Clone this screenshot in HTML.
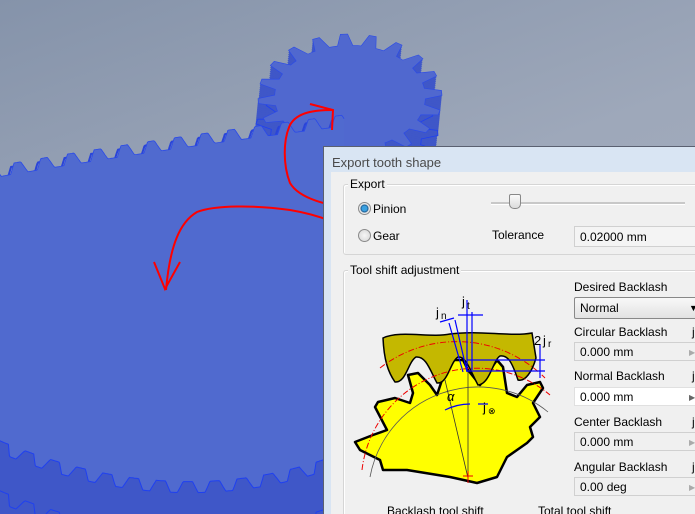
<!DOCTYPE html>
<html><head><meta charset="utf-8">
<style>
html,body{margin:0;padding:0;width:695px;height:514px;overflow:hidden;font-family:"Liberation Sans",sans-serif;position:relative;}
#bg{position:absolute;left:0;top:0;width:695px;height:514px;background:linear-gradient(160deg,#8593aa 0%,#9ea8ba 45%,#a9b1c1 100%);}
svg{position:absolute;left:0;top:0;}
.dlg{position:absolute;left:323px;top:146px;width:372px;height:368px;overflow:hidden;background:#d9e5f3;border-left:1px solid #5a6070;border-top:1px solid #5a6070;}
.title{position:absolute;left:8px;top:8px;font-size:13px;color:#4a4a4a;}
.body{position:absolute;left:7px;top:25px;right:0;bottom:0;background:#f0f0f0;overflow:hidden;}
.t{position:absolute;font-size:12px;color:#000;white-space:nowrap;}
.grp{position:absolute;border:1px solid #d5d5d5;border-radius:3px;box-shadow:inset 1px 1px 0 #fff;}
.gl{position:absolute;background:#f0f0f0;padding:0 2px;font-size:12px;}
.inp{position:absolute;height:19px;border:1px solid #d0d0d0;background:#f0f0f0;font-size:12px;line-height:19px;padding-left:5px;box-sizing:border-box;}
.radio{position:absolute;width:11px;height:11px;border-radius:50%;border:1px solid #8a8a8a;background:radial-gradient(circle,#f6f6f6,#d5d5d5);}
</style></head><body>
<div id="bg"></div>
<svg width="695" height="514" id="gears"></svg>
<div class="dlg">
 <div class="title">Export tooth shape</div>
 <div class="body">
  <div class="grp" style="left:12px;top:12px;width:400px;height:69px;"></div>
  <div class="gl" style="left:17px;top:5px;">Export</div>
  <div class="radio" style="left:27px;top:30px;background:radial-gradient(circle,#3aa0e0 0 2.5px,#1a5a90 3.5px,#e8e8e8 4.5px);"></div>
  <div class="t" style="left:42px;top:30px;">Pinion</div>
  <div class="radio" style="left:27px;top:57px;"></div>
  <div class="t" style="left:42px;top:57px;">Gear</div>
  <div style="position:absolute;left:160px;top:30px;width:194px;height:2px;background:#c8c8c8;border-bottom:1px solid #fff;"></div>
  <div style="position:absolute;left:178px;top:22px;width:10px;height:13px;border:1px solid #888;border-radius:2px 2px 5px 5px;background:linear-gradient(#fafafa,#dcdcdc);"></div>
  <div class="t" style="left:161px;top:56px;">Tolerance</div>
  <div class="inp" style="left:243px;top:54px;width:140px;height:21px;line-height:21px;background:#f4f4f4;">0.02000 mm</div>

  <div class="grp" style="left:12px;top:98px;width:400px;height:280px;"></div>
  <div class="gl" style="left:17px;top:91px;">Tool shift adjustment</div>
  <div class="t" style="left:243px;top:108px;">Desired Backlash</div>
  <div class="inp" style="left:243px;top:125px;width:130px;height:22px;line-height:20px;border:1px solid #888;background:linear-gradient(#f8f8f8,#e2e2e2);border-radius:2px;">Normal<span style="position:absolute;left:114px;top:0;font-size:9px;">&#9660;</span></div>
  <div class="t" style="left:243px;top:153px;">Circular Backlash</div><div class="t" style="left:361px;top:153px;">j</div>
  <div class="inp" style="left:243px;top:170px;width:130px;">0.000 mm<span style="position:absolute;left:114px;color:#aaa;font-size:8px;">&#9654;</span></div>
  <div class="t" style="left:243px;top:197px;">Normal Backlash</div><div class="t" style="left:361px;top:197px;">j</div>
  <div class="inp" style="left:243px;top:215px;width:130px;background:#fff;border-color:#e0e0e0;">0.000 mm<span style="position:absolute;left:114px;color:#666;font-size:8px;">&#9654;</span></div>
  <div class="t" style="left:243px;top:243px;">Center Backlash</div><div class="t" style="left:361px;top:243px;">j</div>
  <div class="inp" style="left:243px;top:260px;width:130px;">0.000 mm<span style="position:absolute;left:114px;color:#aaa;font-size:8px;">&#9654;</span></div>
  <div class="t" style="left:243px;top:288px;">Angular Backlash</div><div class="t" style="left:361px;top:288px;">j</div>
  <div class="inp" style="left:243px;top:305px;width:130px;">0.00 deg<span style="position:absolute;left:114px;color:#aaa;font-size:8px;">&#9654;</span></div>
  <div class="t" style="left:56px;top:333px;line-height:12px;">Backlash tool shift</div>
  <div class="t" style="left:207px;top:333px;line-height:12px;">Total tool shift</div>
 </div>
</div>
<svg width="695" height="514" id="diag" style="pointer-events:none"></svg>
<script>
(function(){
function gear(cx,cy,rx,ry,n,depth,phase){
 var p=[];
 for(var i=0;i<n;i++){
  var a=phase+i*2*Math.PI/n, s=2*Math.PI/n;
  var pts=[[a,0],[a+s*0.15,0],[a+s*0.35,1],[a+s*0.6,1],[a+s*0.8,0]];
  for(var k=0;k<pts.length;k++){
   var b=pts[k][0],t=pts[k][1];
   var f=t?1:(1-depth/((rx+ry)/2));
   p.push((cx+rx*f*Math.cos(b)).toFixed(1)+","+(cy+ry*f*Math.sin(b)).toFixed(1));
  }
 }
 return "M"+p.join("L")+"Z";
}
function along(P0,P1,P2,pitch,depth,sign){
 var N=400,pts=[],len=[0];
 for(var i=0;i<=N;i++){var t=i/N,u=1-t;
  pts.push([u*u*P0[0]+2*u*t*P1[0]+t*t*P2[0],u*u*P0[1]+2*u*t*P1[1]+t*t*P2[1],
   2*u*(P1[0]-P0[0])+2*t*(P2[0]-P1[0]),2*u*(P1[1]-P0[1])+2*t*(P2[1]-P1[1])]);
  if(i>0){len.push(len[i-1]+Math.hypot(pts[i][0]-pts[i-1][0],pts[i][1]-pts[i-1][1]));}
 }
 function lvl(s){var f=(s/pitch)%1;
  if(f<0.15)return 0;if(f<0.35)return (f-0.15)/0.2;if(f<0.6)return 1;if(f<0.8)return 1-(f-0.6)/0.2;return 0;}
 var out=[];
 for(var j=0;j<=N;j++){var q=pts[j];var m=Math.hypot(q[2],q[3]);
  var nx=q[3]/m*sign,ny=-q[2]/m*sign;var d=depth*lvl(len[j]);
  out.push([q[0]+nx*d,q[1]+ny*d]);}
 return out;
}
var P=function(a){return a.map(function(p){return p[0].toFixed(1)+","+p[1].toFixed(1);}).join("L");};
var g=document.getElementById("gears");
var h="";
var pin=gear(350,97,92,63,20,14,0.1);
for(var d=40;d>0;d-=2){h+='<path d="'+pin+'" transform="translate('+(-d*0.1)+','+d+')" fill="#3f57c8"/>';}
h+='<path d="'+pin+'" transform="translate(-4,40)" fill="none" stroke="#1f40f0" stroke-width="0.8"/>';
h+='<path d="'+pin+'" fill="#5068cf" stroke="#2a4ae8" stroke-width="0.6"/>';
var topC=along([-20,180],[150,150],[345,126],27,11,1);
var botC=along([-20,432],[170,520],[345,452],27,11,-1);
var botS=botC.map(function(p){return [p[0],p[1]+50];});
h+='<path d="M'+P(botC)+'L345,514L-20,514Z" fill="#3f57c8"/>';
h+='<path d="M'+P(botS)+'" fill="none" stroke="#1f40f0" stroke-width="1"/>';
h+='<path d="M'+P(topC.map(function(p){return [p[0]-3,p[1]+4];}))+'" fill="none" stroke="#2a44d8" stroke-width="2"/>';
h+='<path d="M'+P(topC)+'L345,460L'+P(botC.slice().reverse())+'Z" fill="#506acf"/>';
h+='<path d="M'+P(topC)+'" fill="none" stroke="#2a4ae8" stroke-width="0.8"/>';
h+='<path d="M'+P(botC)+'" fill="none" stroke="#1f40f0" stroke-width="1"/>';
h+='<path d="M352,209 C330,205 300,200 290,183 C283,165 283,140 290,125 C297,112 315,110 333,110" fill="none" stroke="#f00" stroke-width="2"/>';
h+='<path d="M310,104 L333,110 L332,130" fill="none" stroke="#f00" stroke-width="2"/>';
h+='<path d="M358,237 C345,225 320,215 290,210 C255,205 215,205 197,212 C180,222 170,245 166,290" fill="none" stroke="#f00" stroke-width="2"/>';
h+='<path d="M154,262 L165,289 L180,262" fill="none" stroke="#f00" stroke-width="2"/>';
g.innerHTML=h;
var s="";
var yp="M380,460 L360,450 L355,442 L373,435 L387,430 L375,407 L378,402 L395,398 L410,403 L413,393 L408,375 L418,373 L430,385 L437,395 L442,380 L453,360 L463,360 L468,370 L480,385 L490,370 L497,360 L503,367 L507,393 L517,397 L527,385 L540,382 L543,388 L533,403 L540,417 L530,427 L533,437 L527,443 L517,450 L507,457 L497,477 L477,483 L450,477 L407,470 L383,470 Z";
s+='<path d="'+yp+'" fill="#ffff00" stroke="#000" stroke-width="2.5" stroke-linejoin="round"/>';
s+='<path d="M383,338 C400,330 430,338 450,334 C480,330 510,337 532,333 L536,358 C532,372 525,382 518,380 C512,362 508,355 500,356 C493,360 490,384 478,385 C470,370 466,356 458,357 C450,362 448,384 437,383 C430,370 426,356 416,357 C408,362 406,383 395,382 C388,372 384,360 383,338 Z" fill="#c4b800" stroke="#000" stroke-width="1.5"/>';
s+='<path d="M380,368 A125,125 0 0 1 545,378" fill="none" stroke="#e00" stroke-width="1" stroke-dasharray="6,2,1,2"/>';
s+='<path d="M362,470 A115,115 0 0 1 550,395" fill="none" stroke="#e00" stroke-width="1" stroke-dasharray="6,2,1,2"/>';
s+='<path d="M370,477 A110,110 0 0 1 548,412" fill="none" stroke="#555" stroke-width="0.8"/>';
s+='<path d="M468,478 L445,380 M468,478 L468,370" stroke="#333" stroke-width="0.8" fill="none"/>';
s+='<path d="M463,476 L473,476 M468,471 L468,483" stroke="#e00" stroke-width="1"/>';
s+='<g stroke="#00f" stroke-width="1.2" fill="none"><path d="M467,300 L467,370 M472,312 L472,370 M467,360 L545,360 M467,371 L545,371 M540,345 L540,378 M458,315 L483,315 M455,320 L467,372 M449,323 L463,372 M445,410 C455,405 465,404 470,404 M478,404 L488,404 M440,322 L454,318"/></g>';
s+='<g font-family="Liberation Sans,sans-serif" font-size="13" fill="#000"><text x="436" y="317">j</text><text x="441" y="319" font-size="10">n</text><text x="462" y="306">j</text><text x="467" y="309" font-size="10">t</text><text x="534" y="345">2</text><text x="543" y="345">j</text><text x="548" y="347" font-size="10">r</text><text x="447" y="401" font-style="italic">α</text><text x="483" y="412">j</text><text x="488" y="414" font-size="9">⊗</text></g>';
document.getElementById("diag").innerHTML=s;
})();
</script>
</body></html>
